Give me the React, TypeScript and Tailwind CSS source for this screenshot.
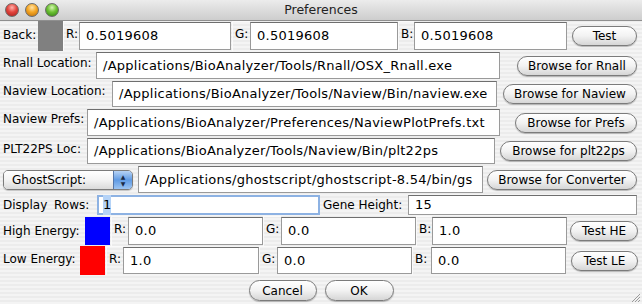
import React from "react";

const Field = ({ value, className }: { value: string; className: string }) => (
  <div
    className={`flex items-center bg-white border border-[#9a9a9a] border-t-[#6e6e6e] pl-[6px] text-[13px] tracking-[0.25px] text-black whitespace-nowrap overflow-hidden ${className}`}
  >
    {value}
  </div>
);

const Tag = ({ text, className }: { text: string; className: string }) => (
  <div className={`h-full flex items-start pt-[3px] pl-[2px] border-l border-t border-[#fafafa] text-[12px] text-black ${className}`}>
    {text}
  </div>
);

const Pill = ({ text, className }: { text: string; className: string }) => (
  <button
    className={`h-[20px] rounded-full border border-[#7b7b7b] bg-gradient-to-b from-white via-[#f2f2f2] to-[#d6d6d6] shadow-[0_1px_1px_rgba(0,0,0,0.25)] text-[12px] text-black flex items-center justify-center ${className}`}
  >
    {text}
  </button>
);

const Light = ({ c }: { c: string }) => (
  <div className={`w-[14px] h-[14px] rounded-full border border-[#6b6b6b] ${c}`} />
);

export default function App() {
  return (
    <div className="w-[642px] h-[304px] overflow-hidden flex flex-col font-['Lucida_Grande','DejaVu_Sans',sans-serif] text-[12px] text-black bg-[repeating-linear-gradient(180deg,#ececec_0px,#ececec_2px,#f4f4f4_2px,#f4f4f4_4px)]">
      {/* title bar */}
      <div className="relative h-[21px] flex items-center border-b border-[#8f8f8f] bg-gradient-to-b from-[#ececec] to-[#cdcdcd]">
        <div className="flex items-center gap-[6px] pl-[5px]">
          <Light c="bg-[radial-gradient(circle_at_50%_30%,#ffb3ad_0%,#e3453e_45%,#a31e19_100%)]" />
          <Light c="bg-[radial-gradient(circle_at_50%_30%,#ffe2a6_0%,#f5a623_45%,#b86a08_100%)]" />
          <Light c="bg-[radial-gradient(circle_at_50%_30%,#d6f5b3_0%,#6cc133_45%,#2f7d12_100%)]" />
        </div>
        <div className="absolute inset-0 flex items-center justify-center text-[12.5px] text-[#222]">Preferences</div>
      </div>

      {/* Back */}
      <div className="h-[30px] flex items-stretch">
        <div className="w-[38px] pl-[3px] pt-[5px]">Back:</div>
        <div className="w-[25px] bg-[#808080]" />
        <Tag text="R:" className="w-[16px]" />
        <Field value="0.5019608" className="w-[152px] my-[1px]" />
        <Tag text="G:" className="w-[18px] ml-[1px]" />
        <Field value="0.5019608" className="w-[148px] my-[1px]" />
        <Tag text="B:" className="w-[16px]" />
        <Field value="0.5019608" className="w-[153px] my-[1px]" />
        <div className="flex items-center ml-[5px]">
          <Pill text="Test" className="w-[65px]" />
        </div>
      </div>

      {/* Rnall */}
      <div className="h-[29px] flex items-stretch">
        <div className="w-[96px] pl-[3px] pt-[3px]">Rnall Location:</div>
        <Field value="/Applications/BioAnalyzer/Tools/Rnall/OSX_Rnall.exe" className="w-[404px] my-[1px]" />
        <div className="flex items-center ml-[17px]">
          <Pill text="Browse for Rnall" className="w-[120px]" />
        </div>
      </div>

      {/* Naview location */}
      <div className="h-[28px] flex items-stretch">
        <div className="w-[112px] pl-[3px] pt-[2px]">Naview Location:</div>
        <Field value="/Applications/BioAnalyzer/Tools/Naview/Bin/naview.exe" className="w-[385px] my-[1px]" />
        <div className="flex items-center ml-[6px]">
          <Pill text="Browse for Naview" className="w-[134px]" />
        </div>
      </div>

      {/* Naview prefs */}
      <div className="h-[29px] flex items-stretch">
        <div className="w-[87px] pl-[3px] pt-[2px]">Naview Prefs:</div>
        <Field value="/Applications/BioAnalyzer/Preferences/NaviewPlotPrefs.txt" className="w-[413px] my-[1px]" />
        <div className="flex items-center ml-[15px]">
          <Pill text="Browse for Prefs" className="w-[122px]" />
        </div>
      </div>

      {/* PLT22PS */}
      <div className="h-[28px] flex items-stretch">
        <div className="w-[87px] pl-[3px] pt-[3px]">PLT22PS Loc:</div>
        <Field value="/Applications/BioAnalyzer/Tools/Naview/Bin/plt22ps" className="w-[408px] my-[1px]" />
        <div className="flex items-center ml-[5px]">
          <Pill text="Browse for plt22ps" className="w-[137px]" />
        </div>
      </div>

      {/* GhostScript */}
      <div className="h-[29px] flex items-stretch">
        <div className="w-[138px] pl-[3px] flex items-center">
          <div className="w-[130px] h-[20px] flex rounded-[5px] border border-[#7b7b7b] overflow-hidden shadow-[0_1px_1px_rgba(0,0,0,0.2)]">
            <div className="flex-1 flex items-center pl-[8px] bg-gradient-to-b from-white via-[#f3f3f3] to-[#dadada]">GhostScript:</div>
            <div className="w-[19px] flex flex-col items-center justify-center bg-gradient-to-b from-[#b7d3f5] via-[#5f9ae3] to-[#9cc4f2] border-l border-[#5576a8] text-[#1b2a44] text-[6px] leading-[7px]">
              <span>▲</span>
              <span>▼</span>
            </div>
          </div>
        </div>
        <Field value="/Applications/ghostscript/ghostscript-8.54/bin/gs" className="w-[345px] my-[1px]" />
        <div className="flex items-center ml-[4px]">
          <Pill text="Browse for Converter" className="w-[150px]" />
        </div>
      </div>

      {/* Display rows */}
      <div className="h-[22px] flex items-stretch">
        <div className="w-[54px] pl-[3px] flex items-center">Display</div>
        <div className="w-[43px] flex items-center">Rows:</div>
        <div className="w-[223px] my-[1px] flex items-center bg-white border-[2px] border-[#8db2e3] pl-[4px] text-[13px]">
          <span className="bg-[#b5d3f7]">1</span>
        </div>
        <div className="w-[88px] pl-[3px] flex items-center">Gene Height:</div>
        <Field value="15" className="w-[229px] my-[1px]" />
      </div>

      {/* High energy */}
      <div className="h-[30px] flex items-stretch">
        <div className="w-[85px] pl-[3px] pt-[6px]">High Energy:</div>
        <div className="w-[25px] my-[1px] bg-[#0000ff]" />
        <Tag text="R:" className="w-[17px] ml-[1px]" />
        <Field value="0.0" className="w-[135px] my-[1px]" />
        <Tag text="G:" className="w-[18px]" />
        <Field value="0.0" className="w-[135px] my-[1px]" />
        <Tag text="B:" className="w-[16px]" />
        <Field value="1.0" className="w-[135px] my-[1px]" />
        <div className="flex items-center ml-[3px]">
          <Pill text="Test HE" className="w-[68px]" />
        </div>
      </div>

      {/* Low energy */}
      <div className="h-[29px] flex items-stretch">
        <div className="w-[80px] pl-[3px] pt-[4px]">Low Energy:</div>
        <div className="w-[25px] bg-[#ff0000]" />
        <Tag text="R:" className="w-[17px] ml-[1px]" />
        <Field value="1.0" className="w-[136px] my-[1px]" />
        <Tag text="G:" className="w-[18px]" />
        <Field value="0.0" className="w-[135px] my-[1px]" />
        <Tag text="B:" className="w-[19px]" />
        <Field value="0.0" className="w-[135px] my-[1px]" />
        <div className="flex items-center ml-[5px]">
          <Pill text="Test LE" className="w-[67px]" />
        </div>
      </div>

      {/* bottom buttons */}
      <div className="relative flex-1 flex items-start justify-center gap-[8px] pt-[5px]">
        <Pill text="Cancel" className="w-[68px] h-[21px]" />
        <Pill text="OK" className="w-[69px] h-[21px]" />
        <svg className="absolute right-[1px] bottom-[1px]" width="12" height="12" viewBox="0 0 12 12">
          <path d="M11 3 L3 11 M11 6 L6 11 M11 9 L9 11" stroke="#9a9a9a" strokeWidth="1" />
        </svg>
      </div>
    </div>
  );
}
